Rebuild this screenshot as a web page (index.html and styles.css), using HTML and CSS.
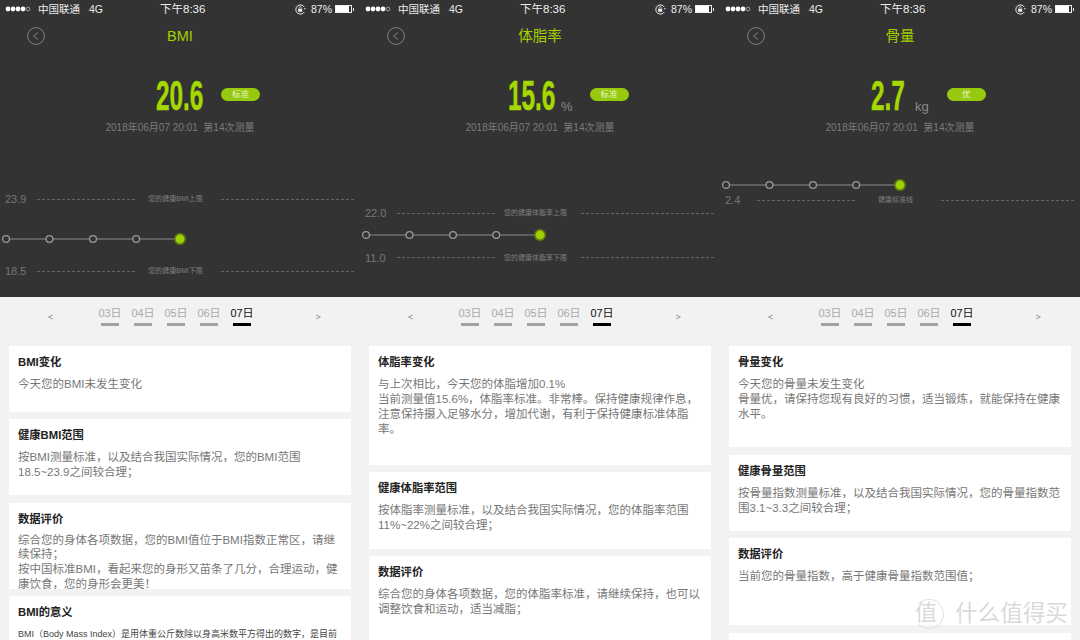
FILE: index.html
```html
<!DOCTYPE html>
<html lang="zh-CN">
<head>
    <meta charset="UTF-8">
    <title>身体数据</title>
    <link rel="stylesheet" href="styles.css">
</head>
<body>
    <svg class="defs" width="0" height="0">
        <symbol id="dots" viewBox="0 0 26 6">
            <circle cx="3" cy="3" r="2.4" fill="#fff"/>
            <circle cx="8" cy="3" r="2.4" fill="#fff"/>
            <circle cx="13" cy="3" r="2.4" fill="#fff"/>
            <circle cx="18" cy="3" r="2.4" fill="#fff"/>
            <circle cx="23" cy="3" r="1.9" fill="none" stroke="#ccc" stroke-width=".7"/>
        </symbol>
        <symbol id="lock" viewBox="0 0 11 11">
            <path d="M9.3 3A4.6 4.6 0 1 0 9.3 8" fill="none" stroke="#eee" stroke-width="1"/>
            <path d="M8.8 4.2h2L9.8 5.8z" fill="#eee"/>
            <rect x="3.2" y="4.8" width="4" height="3" fill="#eee"/>
            <path d="M4 4.8V3.8a1.2 1.2 0 0 1 2.4 0v1" fill="none" stroke="#eee" stroke-width=".7"/>
        </symbol>
        <symbol id="back" viewBox="0 0 18 18">
            <circle cx="9" cy="9" r="8.4" fill="none" stroke="#8a8a8a" stroke-width=".9"/>
            <path d="M11 5.6L6.4 9l4.6 3.4" fill="none" stroke="#8a8a8a" stroke-width=".9"/>
        </symbol>
        <symbol id="track" viewBox="0 0 190 16">
            <path d="M6 8H180" stroke="#8c8c8c" stroke-width="1.2"/>
            <g fill="#333" stroke="#999" stroke-width="1.3">
                <circle cx="6" cy="8" r="3.4"/>
                <circle cx="49.5" cy="8" r="3.4"/>
                <circle cx="93" cy="8" r="3.4"/>
                <circle cx="136.2" cy="8" r="3.4"/>
            </g>
            <circle cx="180" cy="8" r="6" fill="#5f7a12"/>
            <circle cx="180" cy="8" r="4.4" fill="#9fd000"/>
        </symbol>
    </svg>

    <div class="screens">
        <!-- BMI -->
        <section class="screen screen-bmi">
            <div class="dark">
                <div class="status-bar">
                    <div class="carrier">
                        <svg class="dots"><use href="#dots"/></svg>
                        <span>中国联通</span>
                        <span class="net">4G</span>
                    </div>
                    <div class="clock">下午8:36</div>
                    <div class="power">
                        <svg class="lock"><use href="#lock"/></svg>
                        <span>87%</span>
                        <span class="battery"><span class="battery-fill"></span></span>
                        <span class="battery-nub"></span>
                    </div>
                </div>
                <div class="nav">
                    <svg class="back"><use href="#back"/></svg>
                    <div class="nav-title">BMI</div>
                </div>
                <div class="metric">
                    <div class="big-num"><span>20.6</span></div>
                    <div class="pill">标准</div>
                </div>
                <div class="meta">2018年06月07 20:01&nbsp; 第14次测量</div>
                <div class="chart">
                    <div class="limit">
                        <span class="limit-val">23.9</span><i class="dash"></i>
                        <span class="limit-label">您的健康BMI上限</span><i class="dash"></i>
                    </div>
                    <svg class="track"><use href="#track"/></svg>
                    <div class="limit limit-low">
                        <span class="limit-val">18.5</span><i class="dash"></i>
                        <span class="limit-label">您的健康BMI下限</span><i class="dash"></i>
                    </div>
                </div>
            </div>
            <div class="dates">
                <div class="arrow arrow-prev">&lt;</div>
                <div class="date">03日</div>
                <div class="date">04日</div>
                <div class="date">05日</div>
                <div class="date">06日</div>
                <div class="date active">07日</div>
                <div class="arrow arrow-next">&gt;</div>
            </div>
            <div class="cards">
                <div class="card c1">
                    <h3>BMI变化</h3>
                    <p>今天您的BMI未发生变化</p>
                </div>
                <div class="card c2">
                    <h3>健康BMI范围</h3>
                    <p>按BMI测量标准，以及结合我国实际情况，您的BMI范围18.5~23.9之间较合理；</p>
                </div>
                <div class="card c3">
                    <h3>数据评价</h3>
                    <p>综合您的身体各项数据，您的BMI值位于BMI指数正常区，请继续保持；<br>按中国标准BMI，看起来您的身形又苗条了几分，合理运动，健康饮食，您的身形会更美！</p>
                </div>
                <div class="card c4">
                    <h3>BMI的意义</h3>
                    <p class="small">BMI（Body Mass Index）是用体重公斤数除以身高米数平方得出的数字，是目前</p>
                </div>
            </div>
        </section>

        <!-- 体脂率 -->
        <section class="screen screen-fat">
            <div class="dark">
                <div class="status-bar">
                    <div class="carrier">
                        <svg class="dots"><use href="#dots"/></svg>
                        <span>中国联通</span>
                        <span class="net">4G</span>
                    </div>
                    <div class="clock">下午8:36</div>
                    <div class="power">
                        <svg class="lock"><use href="#lock"/></svg>
                        <span>87%</span>
                        <span class="battery"><span class="battery-fill"></span></span>
                        <span class="battery-nub"></span>
                    </div>
                </div>
                <div class="nav">
                    <svg class="back"><use href="#back"/></svg>
                    <div class="nav-title">体脂率</div>
                </div>
                <div class="metric">
                    <div class="big-num"><span>15.6</span></div>
                    <div class="unit">%</div>
                    <div class="pill">标准</div>
                </div>
                <div class="meta">2018年06月07 20:01&nbsp; 第14次测量</div>
                <div class="chart">
                    <div class="limit">
                        <span class="limit-val">22.0</span><i class="dash"></i>
                        <span class="limit-label">您的健康体脂率上限</span><i class="dash"></i>
                    </div>
                    <svg class="track"><use href="#track"/></svg>
                    <div class="limit limit-low">
                        <span class="limit-val">11.0</span><i class="dash"></i>
                        <span class="limit-label">您的健康体脂率下限</span><i class="dash"></i>
                    </div>
                </div>
            </div>
            <div class="dates">
                <div class="arrow arrow-prev">&lt;</div>
                <div class="date">03日</div>
                <div class="date">04日</div>
                <div class="date">05日</div>
                <div class="date">06日</div>
                <div class="date active">07日</div>
                <div class="arrow arrow-next">&gt;</div>
            </div>
            <div class="cards">
                <div class="card c1">
                    <h3>体脂率变化</h3>
                    <p>与上次相比，今天您的体脂增加0.1%<br>当前测量值15.6%，体脂率标准。非常棒。保持健康规律作息，注意保持摄入足够水分，增加代谢，有利于保持健康标准体脂率。</p>
                </div>
                <div class="card c2">
                    <h3>健康体脂率范围</h3>
                    <p>按体脂率测量标准，以及结合我国实际情况，您的体脂率范围11%~22%之间较合理；</p>
                </div>
                <div class="card c3">
                    <h3>数据评价</h3>
                    <p>综合您的身体各项数据，您的体脂率标准，请继续保持，也可以调整饮食和运动，适当减脂；</p>
                </div>
            </div>
        </section>

        <!-- 骨量 -->
        <section class="screen screen-bone">
            <div class="dark">
                <div class="status-bar">
                    <div class="carrier">
                        <svg class="dots"><use href="#dots"/></svg>
                        <span>中国联通</span>
                        <span class="net">4G</span>
                    </div>
                    <div class="clock">下午8:36</div>
                    <div class="power">
                        <svg class="lock"><use href="#lock"/></svg>
                        <span>87%</span>
                        <span class="battery"><span class="battery-fill"></span></span>
                        <span class="battery-nub"></span>
                    </div>
                </div>
                <div class="nav">
                    <svg class="back"><use href="#back"/></svg>
                    <div class="nav-title">骨量</div>
                </div>
                <div class="metric">
                    <div class="big-num"><span>2.7</span></div>
                    <div class="unit">kg</div>
                    <div class="pill">优</div>
                </div>
                <div class="meta">2018年06月07 20:01&nbsp; 第14次测量</div>
                <div class="chart">
                    <svg class="track"><use href="#track"/></svg>
                    <div class="limit limit-low">
                        <span class="limit-val">2.4</span><i class="dash"></i>
                        <span class="limit-label">健康标准线</span><i class="dash"></i>
                    </div>
                </div>
            </div>
            <div class="dates">
                <div class="arrow arrow-prev">&lt;</div>
                <div class="date">03日</div>
                <div class="date">04日</div>
                <div class="date">05日</div>
                <div class="date">06日</div>
                <div class="date active">07日</div>
                <div class="arrow arrow-next">&gt;</div>
            </div>
            <div class="cards">
                <div class="card c1">
                    <h3>骨量变化</h3>
                    <p>今天您的骨量未发生变化<br>骨量优，请保持您现有良好的习惯，适当锻炼，就能保持在健康水平。</p>
                </div>
                <div class="card c2">
                    <h3>健康骨量范围</h3>
                    <p>按骨量指数测量标准，以及结合我国实际情况，您的骨量指数范围3.1~3.3之间较合理；</p>
                </div>
                <div class="card c3">
                    <h3>数据评价</h3>
                    <p>当前您的骨量指数，高于健康骨量指数范围值；</p>
                </div>
                <div class="card c4"></div>
            </div>
        </section>
    </div>

    <!-- 水印 -->
    <div class="watermark">
        <div class="wm-logo">值</div>
        <div class="wm-text">什么值得买</div>
    </div>
</body>
</html>
```

FILE: styles.css
```css
* {
    margin: 0;
    padding: 0;
    box-sizing: border-box;
}

body {
    font-family: "Liberation Sans", "Noto Sans CJK SC", sans-serif;
    background: #f2f2f2;
    width: 1080px;
    height: 640px;
    overflow: hidden;
    position: relative;
}

.defs {
    position: absolute;
}

.screens {
    display: flex;
}

.screen {
    width: 360px;
    height: 640px;
    overflow: hidden;
}

.dark {
    background: #333333;
    height: 297px;
    overflow: hidden;
}

/* 状态栏 */
.status-bar {
    display: grid;
    grid-template-columns: 160px 44px 1fr;
    height: 18px;
    line-height: 18px;
    align-items: center;
    color: #eeeeee;
    font-size: 10.5px;
}

.carrier {
    display: flex;
    align-items: center;
    padding-left: 5px;
}

.dots {
    width: 26px;
    height: 6px;
    margin-right: 7px;
}

.net {
    margin-left: 9px;
}

.clock {
    font-size: 11.5px;
    white-space: nowrap;
    text-align: center;
}

.power {
    display: flex;
    align-items: center;
    padding-left: 91px;
}

.lock {
    width: 11px;
    height: 11px;
    margin-right: 5px;
}

.battery {
    width: 17px;
    height: 8px;
    margin-left: 3px;
    border: 1px solid #eeeeee;
    background: #333333;
}

.battery-fill {
    display: block;
    width: 87%;
    height: 100%;
    background: #ffffff;
}

.battery-nub {
    width: 1px;
    height: 3px;
    margin-left: 1px;
    background: #eeeeee;
}

/* 标题 */
.nav {
    display: flex;
    height: 36px;
    line-height: 36px;
    position: relative;
}

.back {
    position: absolute;
    left: 27px;
    top: 9px;
    width: 18px;
    height: 18px;
}

.nav-title {
    width: 100%;
    height: 36px;
    text-align: center;
    color: #a4d100;
    font-size: 14.5px;
}

/* 测量值 */
.metric {
    display: flex;
    align-items: flex-start;
    height: 44px;
    margin-top: 20px;
}

.screen-bmi .metric {
    padding-left: 156px;
}

.screen-fat .metric {
    padding-left: 148px;
}

.screen-bone .metric {
    padding-left: 151px;
}

.big-num {
    height: 44px;
    line-height: 44px;
    font-size: 42px;
    font-weight: bold;
    color: #a4d800;
    white-space: nowrap;
    -webkit-text-stroke: 0.5px #a4d800;
}

.big-num span {
    display: block;
    transform: scaleX(0.58);
    transform-origin: left center;
}

.screen-bmi .big-num {
    width: 47px;
}

.screen-fat .big-num {
    width: 43px;
}

.screen-bone .big-num {
    width: 33px;
}

.unit {
    color: #8a8a8a;
    font-size: 13px;
    margin-top: 25px;
}

.screen-fat .unit {
    margin-left: 10px;
}

.screen-bone .unit {
    margin-left: 11px;
}

.pill {
    width: 39px;
    height: 13px;
    margin-top: 14px;
    border-radius: 7px;
    background: #97c90f;
    color: #e8f3c4;
    font-size: 8.5px;
    line-height: 13px;
    text-align: center;
}

.screen-bmi .pill {
    margin-left: 18px;
}

.screen-fat .pill {
    margin-left: 17px;
}

.screen-bone .pill {
    margin-left: 18px;
}

.meta {
    margin-top: 2px;
    height: 16px;
    line-height: 16px;
    color: #7c7c7c;
    font-size: 10px;
    text-align: center;
}

/* 趋势图 */
.screen-bmi .chart {
    margin-top: 56px;
}

.screen-fat .chart {
    margin-top: 70px;
}

.screen-bone .chart {
    margin-top: 41px;
}

.limit {
    display: grid;
    grid-template-columns: 37px 98px 86px 134px;
    align-items: center;
    height: 14px;
}

.limit-val {
    padding-left: 5px;
    color: #777777;
    font-size: 11px;
}

.limit-label {
    padding-right: 5px;
    color: #808080;
    font-size: 7px;
    line-height: 14px;
    text-align: center;
    white-space: nowrap;
}

.dash {
    height: 1px;
    background: repeating-linear-gradient(90deg, #666666 0, #666666 3px, transparent 3px, transparent 5px);
}

.track {
    display: block;
    width: 190px;
    height: 16px;
}

.screen-bmi .track {
    margin-top: 24.5px;
}

.screen-bmi .limit-low {
    margin-top: 17.5px;
}

.screen-fat .track {
    margin-top: 6.5px;
}

.screen-fat .limit-low {
    margin-top: 8px;
}

/* 日期 */
.dates {
    display: grid;
    grid-template-columns: 93.5px repeat(5, 33px) 1fr;
    height: 49px;
    padding-top: 10px;
    background: #f2f2f2;
}

.arrow {
    color: #888888;
    font-size: 9px;
    line-height: 20px;
}

.arrow-prev {
    padding-left: 48px;
}

.arrow-next {
    padding-left: 57px;
}

.date {
    color: #aaaaaa;
    font-size: 11px;
    line-height: 12px;
    text-align: center;
}

.date::after {
    content: "";
    display: block;
    width: 18px;
    height: 3px;
    margin: 4px auto 0;
    background: #a3a3a3;
}

.date.active {
    color: #111111;
}

.date.active::after {
    background: #000000;
}

/* 卡片 */
.cards {
    display: flex;
    flex-direction: column;
    gap: 7.3px;
    padding: 0 9px;
}

.card {
    flex: none;
    background: white;
    padding: 8px 9px 0;
    overflow: hidden;
}

.card h3 {
    font-size: 11.3px;
    font-weight: bold;
    line-height: 16px;
    color: #222222;
    margin-bottom: 7px;
}

.card p {
    font-size: 11.5px;
    line-height: 15px;
    color: #777777;
    width: 323px;
}

.card p.small {
    font-size: 9px;
    color: #444444;
}

.screen-bmi .c1 { height: 66px; }
.screen-bmi .c2 { height: 76px; }
.screen-bmi .c3 { height: 86.3px; }
.screen-bmi .c4 { height: 60px; }

.screen-bmi .c3 h3 {
    margin-bottom: 6px;
}

.screen-bmi .c3 p {
    line-height: 14.7px;
}

.screen-fat .c1 { height: 119px; }
.screen-fat .c2 { height: 76.6px; }
.screen-fat .c3 { height: 100px; }

.screen-bone .c1 { height: 101.3px; }
.screen-bone .c2 { height: 76.4px; }
.screen-bone .c3 { height: 87px; }
.screen-bone .c4 { height: 30px; }

/* 水印 */
.watermark {
    position: absolute;
    left: 914px;
    top: 599px;
    display: flex;
    align-items: center;
    color: rgba(205, 205, 205, 0.75);
}

.wm-logo {
    width: 30px;
    height: 30px;
    border: 1px solid rgba(215, 215, 215, 0.7);
    border-left-color: transparent;
    border-radius: 50%;
    font-size: 22px;
    line-height: 26px;
    text-align: left;
}

.wm-text {
    margin-left: 11px;
    font-size: 22.6px;
    line-height: 30px;
    white-space: nowrap;
}
```
